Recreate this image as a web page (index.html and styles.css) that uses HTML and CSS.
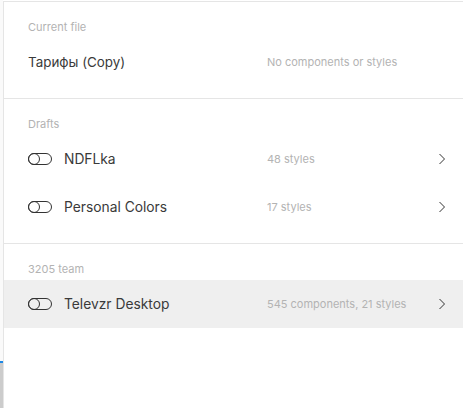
FILE: index.html
```html
<!DOCTYPE html>
<html lang="en">
<head>
    <meta charset="UTF-8">
    <title>Libraries</title>
    <link rel="stylesheet" href="styles.css">
</head>
<body>
    <div class="page">
        <div class="backdrop">
            <div class="backdrop-marker"></div>
            <div class="backdrop-bottom"></div>
        </div>
        <div class="panel">
            <div class="section">
                <div class="section-label">Current file</div>
                <div class="row">
                    <div class="row-name current">Тарифы (Copy)</div>
                    <div class="row-meta">No components or styles</div>
                    <div></div>
                </div>
            </div>
            <div class="section">
                <div class="section-label">Drafts</div>
                <div class="row">
                    <div class="row-name">
                        <svg class="toggle" width="24" height="12" viewBox="0 0 24 12"><rect x="0.5" y="0.5" width="23" height="11" rx="5.5" fill="none" stroke="#333" /><circle cx="6" cy="6" r="5.5" fill="none" stroke="#333" /></svg>
                        NDFLka
                    </div>
                    <div class="row-meta">48 styles</div>
                    <svg class="chevron" width="8" height="12" viewBox="0 0 8 12"><path d="M1.5 1 L6.5 6 L1.5 11" fill="none" stroke="#333" /></svg>
                </div>
                <div class="row">
                    <div class="row-name">
                        <svg class="toggle" width="24" height="12" viewBox="0 0 24 12"><rect x="0.5" y="0.5" width="23" height="11" rx="5.5" fill="none" stroke="#333" /><circle cx="6" cy="6" r="5.5" fill="none" stroke="#333" /></svg>
                        Personal Colors
                    </div>
                    <div class="row-meta">17 styles</div>
                    <svg class="chevron" width="8" height="12" viewBox="0 0 8 12"><path d="M1.5 1 L6.5 6 L1.5 11" fill="none" stroke="#333" /></svg>
                </div>
            </div>
            <div class="section">
                <div class="section-label">3205 team</div>
                <div class="row hovered">
                    <div class="row-name">
                        <svg class="toggle" width="24" height="12" viewBox="0 0 24 12"><rect x="0.5" y="0.5" width="23" height="11" rx="5.5" fill="none" stroke="#333" /><circle cx="6" cy="6" r="5.5" fill="none" stroke="#333" /></svg>
                        Televzr Desktop
                    </div>
                    <div class="row-meta">545 components, 21 styles</div>
                    <svg class="chevron" width="8" height="12" viewBox="0 0 8 12"><path d="M1.5 1 L6.5 6 L1.5 11" fill="none" stroke="#333" /></svg>
                </div>
            </div>
        </div>
    </div>
</body>
</html>
```

FILE: styles.css
```css
body {
    margin: 0;
    font-family: Inter, "Noto Sans", sans-serif;
    background-color: #ffffff;
    color: #333333;
}
.page {
    display: flex;
    height: 408px;
}
.backdrop {
    width: 3px;
    display: flex;
    flex-direction: column;
    background-color: #fafafa;
}
.backdrop-marker {
    margin-top: 361px;
    height: 2px;
    background-color: #1e88e5;
}
.backdrop-bottom {
    flex: 1;
    background-color: #cccccc;
}
.panel {
    flex: 1;
    margin-top: 1px;
    border-top: 1px solid #e5e5e5;
    border-left: 1px solid #e5e5e5;
}
.section {
    padding-bottom: 12px;
    border-bottom: 1px solid #e5e5e5;
}
.section:last-child {
    border-bottom: none;
}
.section-label {
    padding: 18px 24px 4px;
    height: 14px;
    line-height: 14px;
    font-size: 11px;
    color: #b3b3b3;
}
.row {
    display: grid;
    grid-template-columns: 1fr 171px 8px;
    align-items: center;
    height: 48px;
    padding: 0 17px 0 24px;
}
.row.hovered {
    background-color: #efefef;
}
.row-name {
    display: flex;
    align-items: center;
    font-size: 13.8px;
    color: #3a3a3a;
}
.row-name.current {
    font-size: 13.4px;
}
.toggle {
    margin-right: 12px;
}
.row-meta {
    font-size: 11px;
    color: #b3b3b3;
}
.chevron {
    display: block;
}
```
